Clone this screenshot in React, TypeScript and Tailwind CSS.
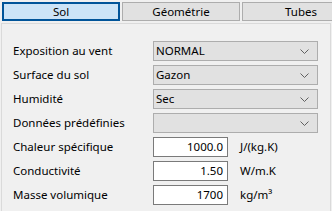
import React from "react";

const Chevron = () => (
  <svg width="9" height="5" viewBox="0 0 9 5" className="shrink-0">
    <path d="M0.5 0.5 L4.5 4.5 L8.5 0.5" fill="none" stroke="#606060" strokeWidth="1" />
  </svg>
);

const Select = ({ value }: { value: string }) => (
  <div className="h-[20px] w-[165px] flex items-center justify-between bg-[#e1e1e1] border border-[#adadad] pl-[2px] pr-[8px]">
    <span className="leading-none">{value}</span>
    <Chevron />
  </div>
);

const NumInput = ({ value, unit }: { value: string; unit: string }) => (
  <div className="flex items-center gap-[12px]">
    <div className="h-[20px] w-[75px] flex items-center justify-end bg-white border border-[#7a7a7a] pr-[4px]">
      <span className="leading-none">{value}</span>
    </div>
    <span className="leading-none">{unit}</span>
  </div>
);

export default function App() {
  const rows: [string, React.ReactNode][] = [
    ["Exposition au vent", <Select value="NORMAL" />],
    ["Surface du sol", <Select value="Gazon" />],
    ["Humidité", <Select value="Sec" />],
    ["Données prédéfinies", <Select value="" />],
    ["Chaleur spécifique", <NumInput value="1000.0" unit="J/(kg.K)" />],
    ["Conductivité", <NumInput value="1.50" unit="W/m.K" />],
    ["Masse volumique", <NumInput value="1700" unit="kg/m³" />],
  ];
  return (
    <div
      className="w-[332px] h-[211px] overflow-hidden bg-[#f0f0f0] text-[11.5px] text-black"
      style={{ fontFamily: "'Noto Sans', sans-serif" }}
    >
      <div className="flex gap-[2px] pt-[2px] pl-[2px] w-[400px]">
        <div className="w-[118px] h-[19px] flex items-center justify-center bg-[#cce4f7] border-2 border-[#005499]">
          <span className="leading-none">Sol</span>
        </div>
        <div className="w-[118px] h-[19px] flex items-center justify-center bg-[#e1e1e1] border border-[#adadad]">
          <span className="leading-none">Géométrie</span>
        </div>
        <div className="w-[118px] h-[19px] flex items-center justify-center bg-[#e1e1e1] border border-[#adadad]">
          <span className="leading-none">Tubes</span>
        </div>
      </div>
      <div className="mt-[2px] ml-[1px] w-[330px] h-[200px] border border-[#dadada] pt-[17px] pl-[11px] flex flex-col gap-[4px]">
        {rows.map(([label, ctrl], i) => (
          <div key={i} className="flex items-center h-[20px]">
            <span className="w-[140px] leading-none">{label}</span>
            {ctrl}
          </div>
        ))}
      </div>
    </div>
  );
}
